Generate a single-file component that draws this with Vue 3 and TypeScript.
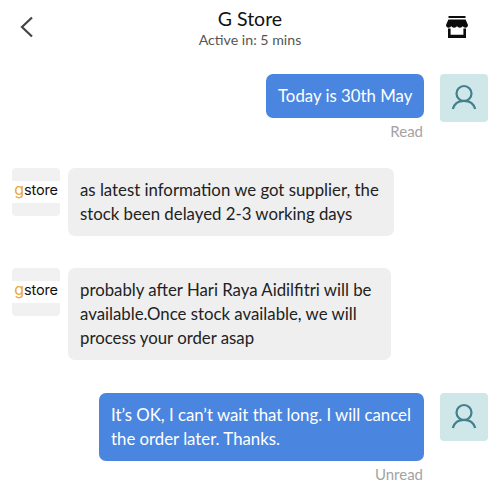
<script setup lang="ts">
interface Msg {
  id: number
  side: 'in' | 'out'
  width: number
  lines: string[]
  status?: string
}
const messages: Msg[] = [
  { id: 1, side: 'out', width: 158, lines: ['Today is 30th May'], status: 'Read' },
  { id: 2, side: 'in', width: 326, lines: ['as latest information we got supplier, the', 'stock been delayed 2-3 working days'] },
  { id: 3, side: 'in', width: 323, lines: ['probably after Hari Raya Aidilfitri will be', 'available.Once stock available, we will', 'process your order asap'] },
  { id: 4, side: 'out', width: 325, lines: ['It’s OK, I can’t wait that long. I will cancel', 'the order later. Thanks.'], status: 'Unread' },
]
</script>

<template>
  <div class="page">
    <header class="top">
      <svg class="back" width="16" height="24" viewBox="0 0 16 24" fill="none">
        <path d="M13 2.500 L3 12 L13 21.500" stroke="#444" stroke-width="2.200" />
      </svg>
      <div class="title">
        <div class="name">G Store</div>
        <div class="active">Active in: 5 mins</div>
      </div>
      <svg class="shop" width="22" height="22" viewBox="0 0 22 22">
        <path fill="#0c0c0c" d="M2.500 0h17v2h-17z" />
        <path fill="#0c0c0c" d="M2.400 3.400h17.200L22 9c0 1.500-1.100 2.700-2.600 2.700-1.200 0-2.100-.7-2.600-1.700-.5 1-1.500 1.700-2.900 1.700s-2.400-.7-2.900-1.700c-.5 1-1.500 1.700-2.900 1.700S5.700 11 5.200 10c-.5 1-1.400 1.700-2.600 1.700C1.100 11.700 0 10.500 0 9z" />
        <path fill="#0c0c0c" d="M2 12.500h2.600v6.200h12.800v-6.200H20V22H2z" />
      </svg>
    </header>

    <main class="list">
      <section v-for="m in messages" :key="m.id" class="row" :class="m.side">
        <div v-if="m.side === 'in'" class="logo">
          <div class="band"><span class="g">g</span><span class="store">store</span></div>
        </div>
        <div class="body">
          <div class="bubble" :style="{ width: m.width + 'px' }">
            <div v-for="line in m.lines" :key="line">{{ line }}</div>
          </div>
          <div v-if="m.status" class="status">{{ m.status }}</div>
        </div>
        <div v-if="m.side === 'out'" class="avatar">
          <svg width="48" height="48" viewBox="0 0 48 48" fill="none" stroke="#41808c" stroke-width="2.200">
            <circle cx="24" cy="19.500" r="7.500" />
            <path d="M12.800 35C14.300 29.500 18.500 26.800 24 26.800S33.700 29.500 35.200 35" />
          </svg>
        </div>
      </section>
    </main>
  </div>
</template>

<style>
html, body { background: #fff; }
</style>

<style scoped>
.page {
  width: 500px;
  height: 493px;
  overflow: hidden;
  font-family: Lato, "Noto Sans", sans-serif;
  background: #fff;
}
.top {
  display: grid;
  grid-template-columns: 1fr auto 1fr;
  align-items: center;
  height: 54px;
  padding: 0 19px;
}
.shop { justify-self: end; margin-right: 13px; }
.title { text-align: center; }
.name { font-size: 19.500px; line-height: 24px; color: #111; margin-top: 2px; }
.active { font-size: 14.200px; line-height: 18px; color: #555; }
.list {
  display: flex;
  flex-direction: column;
  padding: 20px 12px 0;
}
.row { display: flex; align-items: flex-start; }
.row.out { justify-content: flex-end; }
.row + .row { margin-top: 32px; }
.row:nth-child(2) { margin-top: 28px; }
.row:nth-child(4) { margin-top: 32.500px; }
.avatar {
  width: 48px;
  height: 48px;
  margin-left: 16px;
  border-radius: 4px;
  background: #cfe7e9;
}
.avatar svg { display: block; }
.logo {
  width: 48px;
  height: 48px;
  margin-right: 8px;
  border-radius: 4px;
  background: #f1f1f1;
  display: flex;
  align-items: center;
}
.band {
  width: 100%;
  height: 22px;
  background: #fff;
  display: flex;
  justify-content: center;
  align-items: baseline;
  font-family: Inter, sans-serif;
  line-height: 16px;
}
.g { color: #eda62e; font-size: 16px; }
.store { color: #111; font-size: 14.500px; letter-spacing: -0.200px; }
.body { display: flex; flex-direction: column; align-items: flex-end; }
.bubble {
  box-sizing: border-box;
  padding: 10px 12px;
  border-radius: 7px;
  font-size: 16.800px;
  line-height: 24px;
  white-space: nowrap;
}
.in .body { align-items: flex-start; }
.in .bubble { background: #efefef; color: #222; }
.out .bubble { background: #4a86df; color: #fff; }
.status { margin-top: 4px; margin-right: 1px; font-size: 15px; line-height: 18px; color: #a3a3a3; }
</style>
